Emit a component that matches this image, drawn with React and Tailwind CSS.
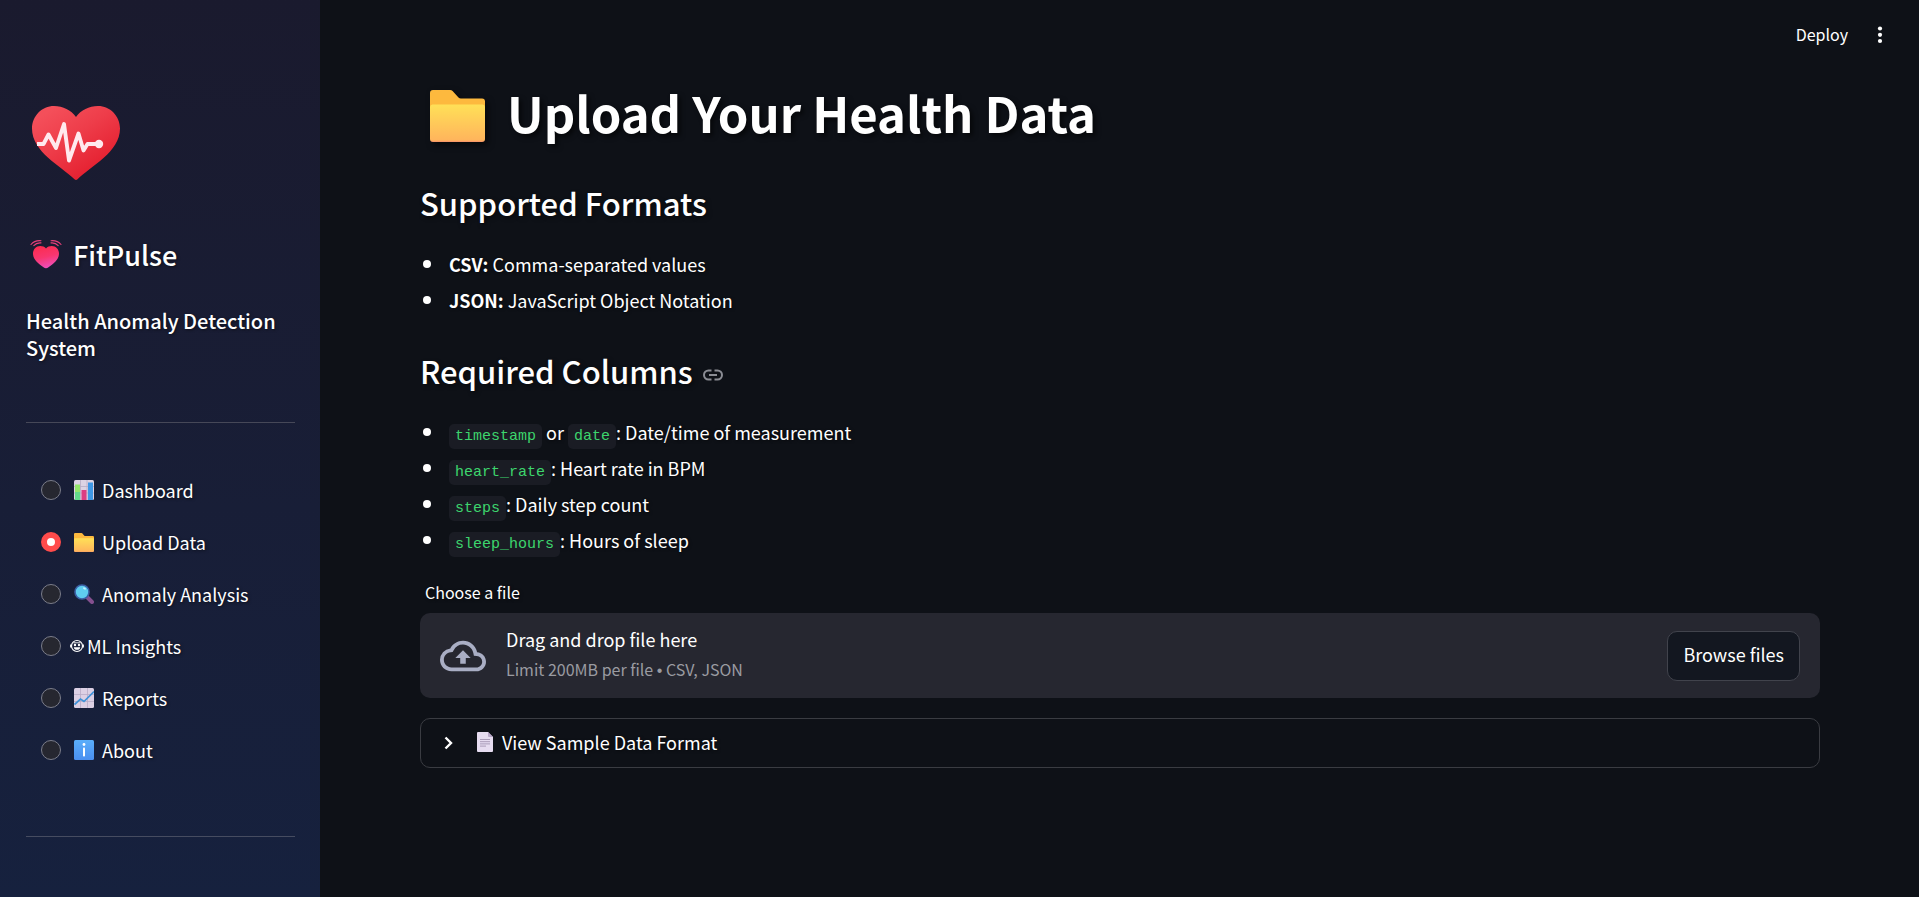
import { useState } from "react";

const shadow = "[text-shadow:1px_1px_3px_rgba(0,0,0,0.5)]";

function HeartLogo() {
  return (
    <svg className="size-[100px]" viewBox="0 0 100 100" role="img" aria-label="FitPulse logo">
      <defs>
        <linearGradient id="heart" x1="0.15" y1="0.1" x2="0.75" y2="0.85">
          <stop offset="0" stopColor="#f44f5a" />
          <stop offset="0.45" stopColor="#ee3d4a" />
          <stop offset="1" stopColor="#e52030" />
        </linearGradient>
      </defs>
      <path
        d="M72 13C63 13 55 17 50 24C45 17 37 13 28 13C16 13 6 23 6 35.500C6 59 35 73 48.500 86.300Q50 87.600 51.500 86.300C65 73 94 59 94 35.500C94 23 84 13 72 13Z"
        fill="url(#heart)"
      />
      <path d="M11 51H17.500L22.500 41.500L30 55L38 31L43 67.500L52.500 40.500L57.500 57.500L61.500 51H73" fill="none" stroke="#ffe9ee" strokeWidth="3.900" strokeLinecap="butt" strokeLinejoin="round" />
      <circle cx="73" cy="51" r="4.200" fill="#ffe9ee" />
    </svg>
  );
}

function BeatingHeart() {
  return (
    <svg className="h-8 w-8 shrink-0" viewBox="0 0 32 32" aria-hidden="true">
      <defs>
        <linearGradient id="beat" x1="0.3" y1="0" x2="0.6" y2="1">
          <stop offset="0" stopColor="#fb2c50" />
          <stop offset="0.5" stopColor="#f8366f" />
          <stop offset="1" stopColor="#ee50c0" />
        </linearGradient>
      </defs>
      <path d="M16 9.500C14.500 7.700 12.500 7 10.300 7C6 7 3 10.500 3 14.500C3 21 9 25 13.500 28.300Q16 30 18.500 28.300C23 25 29 21 29 14.500C29 10.500 26 7 21.700 7C19.500 7 17.500 7.700 16 9.500Z" fill="url(#beat)" />
      <g fill="none" stroke="#e6407a" strokeWidth="1.100" strokeLinecap="round">
        <path d="M1 5.500C3.500 2.500 7 1.300 11 1.700" />
        <path d="M3.800 6.600C5.600 4.500 8 3.600 11 3.900" />
        <path d="M31 5.500C28.500 2.500 25 1.300 21 1.700" />
        <path d="M28.200 6.600C26.400 4.500 24 3.600 21 3.900" />
      </g>
    </svg>
  );
}

function Folder({ className, id }) {
  return (
    <svg className={className} viewBox="0 0 56 52" preserveAspectRatio="none" aria-hidden="true">
      <defs>
        <linearGradient id={id} x1="0" y1="0" x2="0" y2="1">
          <stop offset="0" stopColor="#ffe057" />
          <stop offset="0.95" stopColor="#ffb55c" />
          <stop offset="1" stopColor="#f58f6c" />
        </linearGradient>
      </defs>
      <path d="M3 0H20.500Q22 0 23 1L29 7.500Q30 8.500 31.500 8.500H53Q56 8.500 56 11.500V30H0V3Q0 0 3 0Z" fill="#fdb93e" />
      <path d="M0 17Q0 14.500 2.500 14.500H53.500Q56 14.500 56 17V49Q56 52 53 52H3Q0 52 0 49Z" fill={`url(#${id})`} />
    </svg>
  );
}

function BarChart() {
  return (
    <svg className="size-5" viewBox="0 0 20 20" aria-hidden="true">
      <rect width="20" height="20" rx="1.500" fill="#ddd3e4" />
      <path d="M0 6.500H20M0 13H20M6.500 0V20M13 0V20" stroke="#b8acc4" strokeWidth="0.800" />
      <rect x="1" y="4.500" width="5" height="15.500" fill="#93e66a" />
      <rect x="1" y="12" width="5" height="8" fill="#62d98a" />
      <rect x="7.500" y="10" width="5" height="10" fill="#dd3d82" />
      <rect x="14" y="2.500" width="5" height="17.500" fill="#3f97e6" />
    </svg>
  );
}

function Magnifier() {
  return (
    <svg className="size-5" viewBox="0 0 20 20" aria-hidden="true">
      <path d="M12.500 12.500L18 18" stroke="#84508f" strokeWidth="4" strokeLinecap="round" />
      <circle cx="8" cy="8" r="7" fill="#5fcdf0" stroke="#3b5fa5" strokeWidth="1.600" />
      <ellipse cx="10.500" cy="4.500" rx="1.600" ry="1" fill="#c4f2ff" transform="rotate(30 10.500 4.500)" />
    </svg>
  );
}

function RobotFace() {
  return (
    <svg className="h-3.5 w-3.5" viewBox="0 0 14 14" aria-hidden="true">
      <circle cx="7" cy="7" r="5.500" fill="none" stroke="#fff" strokeWidth="1.200" />
      <path d="M0.700 5.500V8.500M13.300 5.500V8.500" stroke="#fff" strokeWidth="1.200" />
      <path d="M3.500 3.800H10.500" stroke="#fff" strokeWidth="0.900" />
      <circle cx="5" cy="6" r="1.200" fill="#fff" />
      <circle cx="9" cy="6" r="1.200" fill="#fff" />
      <path d="M3.800 8.200H10.200Q9.800 10.800 7 10.800T3.800 8.200Z" fill="#fff" />
    </svg>
  );
}

function LineChart() {
  return (
    <svg className="size-5" viewBox="0 0 20 20" aria-hidden="true">
      <rect width="20" height="20" rx="1.500" fill="#dcd0e4" />
      <path d="M0 6.500H20M0 13.500H20M6.500 0V20M13.500 0V20" stroke="#b9abc6" strokeWidth="0.800" />
      <path d="M0.500 16.500L6.500 11L10 13.500L20 3.500" fill="none" stroke="#3e92d8" strokeWidth="1.700" />
    </svg>
  );
}

function Info() {
  return (
    <svg className="size-5" viewBox="0 0 20 20" aria-hidden="true">
      <defs>
        <linearGradient id="info" x1="0" y1="0" x2="0" y2="1">
          <stop offset="0" stopColor="#5aaefb" />
          <stop offset="1" stopColor="#4a8ff0" />
        </linearGradient>
      </defs>
      <rect width="20" height="20" rx="1.500" fill="url(#info)" />
      <circle cx="10" cy="4.500" r="1.400" fill="#fff" />
      <rect x="9" y="7.500" width="2" height="9" rx="0.800" fill="#fff" />
    </svg>
  );
}

function Page() {
  return (
    <svg className="h-5 w-4" viewBox="0 0 16 20" aria-hidden="true">
      <path d="M1 0H11L16 5V19Q16 20 15 20H1Q0 20 0 19V1Q0 0 1 0Z" fill="#e6dcf0" />
      <path d="M11 0L16 5H12Q11 5 11 4Z" fill="#b9a8c9" />
      <path d="M3 7.500H13M3 9.700H13M3 11.900H13M3 14.100H9" stroke="#a99bb8" strokeWidth="1" />
    </svg>
  );
}

const pages = [
  { name: "Dashboard", icon: <BarChart /> },
  { name: "Upload Data", icon: <Folder className="h-[19px] w-5" id="folder-nav" /> },
  { name: "Anomaly Analysis", icon: <Magnifier /> },
  { name: "ML Insights", icon: <RobotFace />, compact: true },
  { name: "Reports", icon: <LineChart /> },
  { name: "About", icon: <Info /> },
];

function Sidebar() {
  const [page, setPage] = useState("Upload Data");
  return (
    <aside className="w-80 shrink-0 bg-linear-to-b from-[#1a1a2e] to-[#16213e] pr-[25px] pl-[26px] pt-[93px]">
      <HeartLogo />
      <h2 className={`mt-11 flex items-center gap-[11px] pl-1 text-[27px] leading-9 font-medium ${shadow}`}>
        <BeatingHeart />
        FitPulse
      </h2>
      <h3 className={`mt-[34px] text-[20px] leading-[27px] font-medium ${shadow}`}>Health Anomaly Detection System</h3>
      <hr className="mt-[61px] border-[#464858]" />
      <fieldset className="mt-[41px]" aria-label="Navigation">
        {pages.map((p) => (
          <label key={p.name} className={`flex h-[52px] items-center pl-[15px] text-[18px] leading-7 ${shadow}`}>
            <input
              type="radio"
              name="page"
              checked={page === p.name}
              onChange={() => setPage(p.name)}
              className="size-5 shrink-0 appearance-none rounded-full border border-[#7b7d8a] bg-[#262730] checked:border-[6px] checked:border-[#ff4b4b] checked:bg-white"
            />
            <span className={p.compact ? "ml-[9px] flex items-center gap-[3px]" : "ml-[13px] flex items-center gap-2"}>
              {p.icon}
              {p.name}
            </span>
          </label>
        ))}
      </fieldset>
      <hr className="mt-[60px] border-[#464c60]" />
    </aside>
  );
}

function Code({ children }) {
  return (
    <code className="rounded-[5px] bg-[#1a1c24] px-1.5 py-1 font-['Liberation_Mono',monospace] text-[15px] leading-4 text-[#3dd56d] [text-shadow:none]">
      {children}
    </code>
  );
}

function Item({ children }) {
  return (
    <li className="flex items-center gap-[18px] pl-[3px]">
      <span className="size-2 shrink-0 rounded-full bg-white" aria-hidden="true" />
      <span>{children}</span>
    </li>
  );
}

export default function App() {
  return (
    <div className="flex min-h-screen bg-[#0e1117] font-['Source_Sans_Pro','Noto_Sans_CJK_SC',sans-serif] text-white">
      <Sidebar />
      <div className="flex min-w-0 grow flex-col">
        <header className="flex h-[70px] items-center justify-end gap-[22px] pr-[29px]">
          <button type="button" className="pb-0.5 text-[16px] leading-6">Deploy</button>
          <button type="button" aria-label="Main menu">
            <svg className="h-5 w-5" viewBox="0 0 20 20" fill="#fff" aria-hidden="true">
              <circle cx="10" cy="3.500" r="2.100" />
              <circle cx="10" cy="9.800" r="2.100" />
              <circle cx="10" cy="16" r="2.100" />
            </svg>
          </button>
        </header>
        <main className="pt-[10px] pr-[99px] pl-[100px]">
          <h1 className="flex items-end gap-[22px] pl-2.5 text-[49px] leading-[64px] font-bold [text-shadow:3px_3px_5px_rgba(0,0,0,0.6)]">
            <Folder className="mb-0.5 h-[52px] w-[55px] drop-shadow-[3px_3px_3px_rgba(0,0,0,0.6)]" id="folder-title" />
            Upload Your Health Data
          </h1>
          <h2 className="mt-[38px] text-[31px] leading-[42px] font-medium [text-shadow:2px_2px_4px_rgba(0,0,0,0.5)]">Supported Formats</h2>
          <ul className={`mt-[22px] text-[18px] leading-9 ${shadow}`}>
            <Item><strong>CSV:</strong> Comma-separated values</Item>
            <Item><strong>JSON:</strong> JavaScript Object Notation</Item>
          </ul>
          <h2 className="mt-8 flex items-center gap-2.5 text-[31px] leading-[42px] font-medium [text-shadow:2px_2px_4px_rgba(0,0,0,0.5)]">
            Required Columns
            <a href="#required-columns" aria-label="Link to heading" className="pt-2">
              <svg className="h-3 w-5" viewBox="0 0 20 12" fill="none" stroke="#8b8d94" strokeWidth="2" aria-hidden="true">
                <path d="M8.500 1.500H5.500A4.500 4.500 0 0 0 5.500 10.500H8.500M11.500 1.500H14.500A4.500 4.500 0 0 1 14.500 10.500H11.500M6 6H14" />
              </svg>
            </a>
          </h2>
          <ul className={`mt-[22px] text-[18px] leading-9 ${shadow}`}>
            <Item><Code>timestamp</Code> or <Code>date</Code>: Date/time of measurement</Item>
            <Item><Code>heart_rate</Code>: Heart rate in BPM</Item>
            <Item><Code>steps</Code>: Daily step count</Item>
            <Item><Code>sleep_hours</Code>: Hours of sleep</Item>
          </ul>
          <label htmlFor="file" className={`mt-[22px] block pl-[5px] text-[16px] leading-6 ${shadow}`}>Choose a file</label>
          <div className="mt-[9px] flex h-[85px] items-center rounded-[10px] bg-[#262730] px-5">
            <input id="file" type="file" accept=".csv,.json" className="sr-only" />
            <svg className="h-8 w-[46px] shrink-0" viewBox="0 0 24 16" fill="#a9aec4" aria-hidden="true">
              <path d="M19.350 6.040A7.490 7.490 0 0 0 12 0C9.110 0 6.600 1.640 5.350 4.040A5.994 5.994 0 0 0 0 10c0 3.310 2.690 6 6 6h13c2.760 0 5-2.240 5-5 0-2.640-2.050-4.780-4.650-4.960zM19 14H6c-2.210 0-4-1.790-4-4 0-2.050 1.530-3.760 3.560-3.970l1.070-.11.5-.95A5.469 5.469 0 0 1 12 2c2.620 0 4.880 1.860 5.390 4.430l.3 1.500 1.530.11A2.980 2.980 0 0 1 22 11c0 1.650-1.350 3-3 3zM8 9h2.550v3h2.900V9H16l-4-4z" />
            </svg>
            <div className="ml-5 grow pb-[3px]">
              <p className="text-[18px] leading-8">Drag and drop file here</p>
              <p className="text-[16px] leading-7 text-[#9a9ba1]">
                Limit 200MB per file <span className="font-['Liberation_Sans',sans-serif]">•</span> CSV, JSON
              </p>
            </div>
            <button type="button" className="h-[50px] rounded-[10px] border border-[#41434c] bg-[#131720] px-[15px] pb-0.5 text-[18px]">
              Browse files
            </button>
          </div>
          <details className="mt-5 rounded-[10px] border border-[#3a3c42]">
            <summary className={`flex h-12 list-none items-center pl-[23px] text-[18px] leading-7 ${shadow}`}>
              <svg className="h-3.5 w-2.5" viewBox="0 0 10 14" fill="none" stroke="#fff" strokeWidth="2.400" aria-hidden="true">
                <path d="M1.500 1.500L7 7L1.500 12.500" />
              </svg>
              <span className="ml-[23px] flex items-center gap-[9px] pb-0.5">
                <Page />
                View Sample Data Format
              </span>
            </summary>
          </details>
        </main>
      </div>
    </div>
  );
}
